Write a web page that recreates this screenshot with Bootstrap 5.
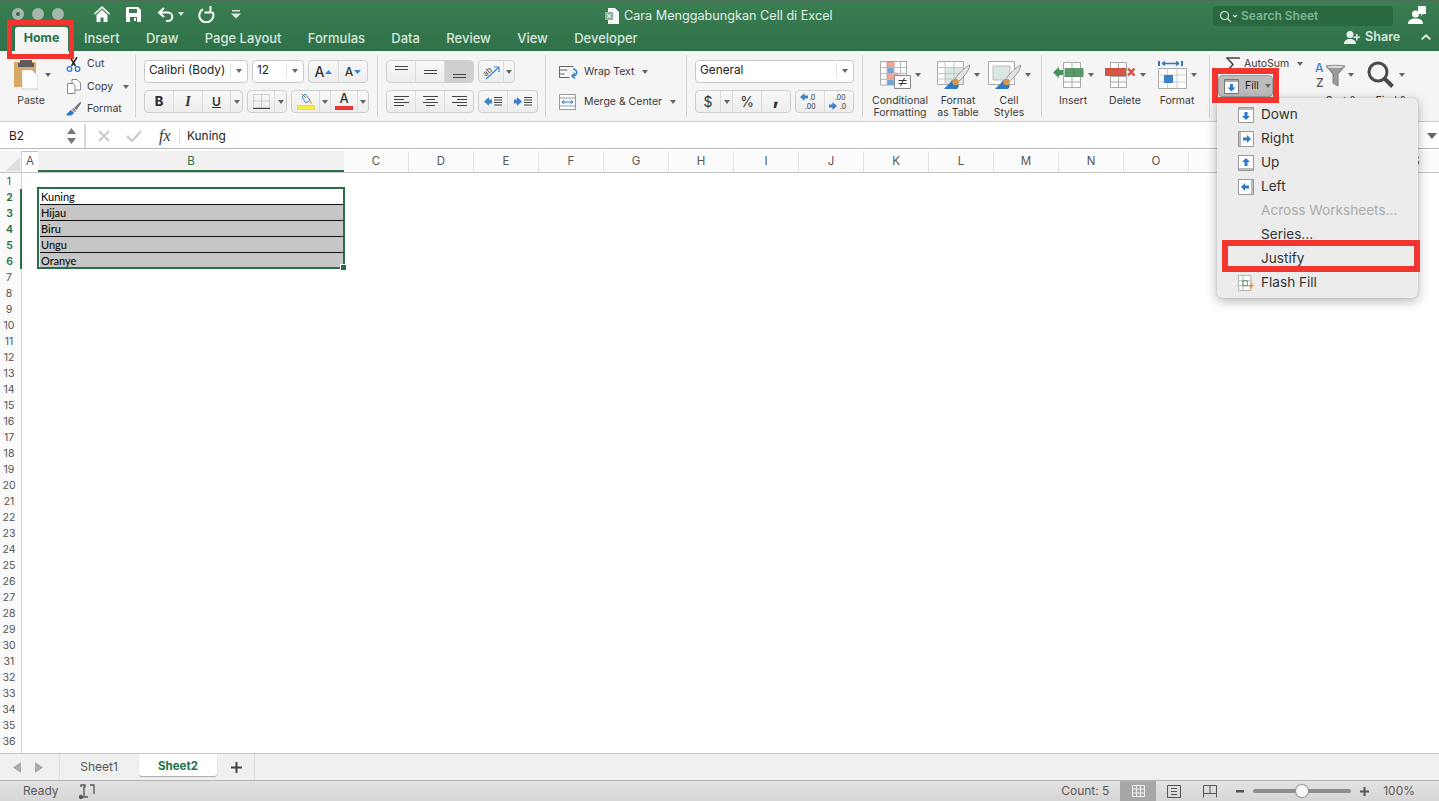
<!DOCTYPE html>
<html lang="en"><head><meta charset="utf-8"><title>Cara Menggabungkan Cell di Excel</title>
<link href="https://cdn.jsdelivr.net/npm/bootstrap@5.3.0/dist/css/bootstrap.min.css" rel="stylesheet">
<style>
html,body{height:100%;overflow:hidden;background:#fff}
body{font-family:Inter,"Liberation Sans",sans-serif;font-size:11px;color:#333}
svg{display:block;flex:none}
.xapp{height:801px;width:1439px;position:relative;overflow:hidden}
.xtitle{height:51px;background:linear-gradient(#3a7e52,#2f7148);border-top:1px solid #4d6f5a;color:#e3efe7;flex:none}
.xtop{height:26px;position:relative}
.xlights{width:90px;padding-left:12px;gap:8px}
.xlight{width:12px;height:12px;border-radius:50%;background:#a5b8ab}
.xqa{gap:16px;padding-left:4px}
.xundo{margin-right:-2px}
.xdoc{position:absolute;left:605px;top:6px;font-size:12.65px;gap:5px;color:#e3efe7}
.xsearch{position:absolute;left:1213px;top:5px;width:180px;height:20px;background:#2a6840;border-radius:3px;color:#7eb594;font-weight:600;font-size:12px;padding-left:6px;gap:2px}
.xperson{position:absolute;left:1408px;top:5px}
.xtabs{height:24px;padding-left:15px;position:relative;font-size:13px;font-weight:500;color:#d8e8dd}
.xtabitem{margin-right:26.3px;line-height:22px}
.xtabhome{width:53px;margin-right:16px;text-align:center;background:#f4f4f4;color:#217346;font-weight:700;font-size:12.4px;border-radius:3px 3px 0 0}
.xshare{position:absolute;left:1344px;top:-1px;gap:5px;font-size:12.6px;font-weight:600;line-height:22px}
.xribbon{height:71px;background:#f5f5f5;border-bottom:1px solid #cfcfcf;flex:none;color:#3a3a3a}
.xg{height:62px;margin-top:4px;border-right:1px solid #d2d2d2;flex:none}
.xg1{width:136px}.xg2{width:242px;padding:5px 0 0 8px}.xg3{width:168px;padding:5px 0 0 8px}.xg4{width:141px;padding:6px 0 0 13px}
.xg5{width:176px;padding:5px 0 0 8px}.xg6{width:179px;padding-left:8px}.xg7{width:168px;padding-left:5px}.xg8{padding-left:5px;border-right:0}
.xrow{height:23px;gap:4px;margin-bottom:7px}
.xsel{height:23px;background:#fff;border:1px solid #c9c9c9;border-radius:4px;font-size:11.8px;padding-left:4px;padding-bottom:2px;color:#222}
.xsel span:first-child{flex:1}
.xselcar{width:17px;height:15px;border-left:1px solid #e3e3e3;align-items:center;justify-content:center;display:flex}
.xcar{width:0;height:0;border-left:3px solid transparent;border-right:3px solid transparent;border-top:4px solid #666;flex:none}
.xbg{height:23px;background:linear-gradient(#f8f8f8,#ededed);border:1px solid #cfcfcf;border-radius:4px}
.xb{height:100%;display:flex;align-items:center;justify-content:center;border-right:1px solid #dcdcdc;flex:none;color:#333}
.xb:last-child{border-right:0}
.xbon{background:#cfcfcf;border-radius:0 3px 3px 0}
.xsm{height:16px;gap:6px;font-size:10.5px;margin-top:1px}
.xsmi{width:15px;display:flex;justify-content:center}
.xbig{flex:none;text-align:center;font-size:10.5px;line-height:12px;padding-top:5px}
.xbigi{height:30px;margin-bottom:5px;display:flex;justify-content:center;gap:4px;align-items:center}
.xcap{font-size:10.5px;height:22px;gap:0}
.xfill{width:55px;height:22px;margin:4px 0 0 3px;background:#bdbdbd;border:1px solid #9d9d9d;border-radius:4px;gap:6px;font-size:10.5px;padding-left:5px;color:#222}
.xfx{height:27px;background:#fff;border-bottom:1px solid #b8b8b8;flex:none;font-size:11.9px;color:#222;position:relative;padding-top:2px}
.xname{width:86px;height:100%;padding-left:9px;border-right:2px solid #d8d8d8;position:relative}
.xfxb{margin-left:11px;gap:15px;width:60px}
.xhead{height:24px;flex:none;border-top:2px solid #fff;box-shadow:inset 0 1px 0 #c0c0c0;border-bottom:1px solid #c6c6c6;background:#fff;color:#555;font-size:11.5px}
.xcorner{width:22px;height:100%;border-right:1px solid #d4d4d4;background:#f5f5f5;position:relative;overflow:hidden;flex:none}
.xca{width:16px}.xcb{width:306px;background:#f1f1f1;color:#217346;box-shadow:inset 0 -2px 0 #2a6e46}
.xcc{width:65px;border-right:1px solid #e3e3e3;background:#fbfbfb}
.xcol{flex:none;height:100%;display:flex;align-items:center;justify-content:center}
.xgrid{flex:1;position:relative;overflow:hidden;min-height:0}
.xr{height:16px}
.xrh{width:22px;height:16px;flex:none;border-right:1px solid #d4d4d4;background:#fafafa;color:#555;font-size:10.5px;display:flex;align-items:center;justify-content:center;padding:2px 3px 0 0}
.xrhon{color:#217346;font-weight:600;border-right:0;box-shadow:inset -2px 0 0 #2a6e46}
.xcell{margin-left:18px;width:303px;height:16px;font-family:Lato,sans-serif;font-size:11px;color:#000;padding-left:1px;line-height:16px;border-bottom:1px solid #111}
.xgray{background:#c6c6c6}
.xselect{position:absolute;left:37px;top:14px;width:308px;height:82px;border:2px solid #2a6e46;pointer-events:none}
.xhandle{position:absolute;right:-4px;bottom:-4px;width:7px;height:7px;background:#2a6e46;border:1px solid #fff}
.xsheets{height:27px;background:#f0f0f0;border-top:1px solid #c8c8c8;flex:none;font-size:12px;color:#555}
.xarr{width:60px;height:100%;border-right:1px solid #dcdcdc;gap:14px;padding-left:13px}
.xtab{width:78px;height:100%;display:flex;align-items:center;justify-content:center}
.xtabon{background:#fff;color:#217346;font-weight:700;font-size:11.5px;box-shadow:0 1px 1px #aaa;border-radius:0 0 3px 3px;align-self:flex-start;height:22px;padding-top:3px;margin-left:1px}
.xplus{width:37px;height:100%;border-right:1px solid #dcdcdc;margin-left:1px;display:flex;align-items:center;justify-content:center}
.xstatus{height:21px;flex:none;background:linear-gradient(#e2e2e2,#d6d6d6);border-top:1px solid #b4b4b4;font-size:12px;color:#5a5a5a;position:relative}
.xready{width:56px;margin-left:23px}
.xcount{margin-left:auto;width:59px}
.xview{width:36px;height:100%;display:flex;align-items:center;justify-content:center;flex:none}
.xviewon{background:#a7a7a7}
.xslider{width:98px;height:4px;background:#8e8e8e;border-radius:2px;position:relative;margin:0 9px}
.xthumb{position:absolute;left:43px;top:-4px;width:12px;height:12px;background:#f6f6f6;border-radius:50%;box-shadow:0 0 1px 1px #999}
.xzoom{margin:0 24px 0 14px}
.xmenu{position:absolute;left:1217px;top:98px;width:201px;height:200px;background:#ececec;border-radius:5px;box-shadow:0 3px 12px rgba(0,0,0,.3),0 0 1px rgba(0,0,0,.4);padding-top:5px;font-size:13.6px;color:#333;z-index:5}
.xmi{height:24px;padding-left:21px;gap:7px;padding-bottom:1px}
.xmicon{width:16px;height:16px;flex:none}
.xdim{color:#ababab}
.xred{position:absolute;border:5px solid #f2352f;z-index:6;pointer-events:none}
.xrhome{left:7px;top:20px;width:67px;height:39px}
.xrfill{left:1212px;top:68px;width:67px;height:35px;border-width:6px}
.xrjust{left:1222px;top:240px;width:198px;height:32px;border-width:6px}
</style></head><body>
<div class="xapp d-flex flex-column">
<header class="xtitle">
 <div class="xtop d-flex align-items-center">
  <div class="xlights d-flex align-items-center"><i class="xlight d-flex align-items-center justify-content-center"><svg width="4" height="4"><circle cx="2" cy="2" r="2" fill="#4c5a50"/></svg></i><i class="xlight"></i><i class="xlight"></i></div>
  <div class="xqa d-flex align-items-center">
   <svg width="16" height="16" viewBox="0 0 16 16" fill="#fff"><path d="M8 0 0 7.500 1 8.700 8 2.200l7 6.500 1-1.200zM2.500 9v7h4v-4.500h3V16h4V9L8 3.800z"/></svg>
   <svg width="15" height="15" viewBox="0 0 15 15"><path d="M1 0h11l3 3v12H0V1z" fill="#fff"/><path d="M3 2h8v4H3zM4 10h7v5H4z" fill="#3a7b50"/><path d="M8 11h2v3H8z" fill="#fff"/></svg>
   <span class="xundo d-flex align-items-center gap-1"><svg width="17" height="15" viewBox="0 0 17 15" fill="none" stroke="#fff" stroke-width="2"><path d="M7 1 2 5.500 7 10M2 5.500h9a4.200 4.200 0 0 1 0 8.500H9"/></svg><i class="xcar" style="border-top-color:#dbe8df"></i></span>
   <svg width="17" height="17" viewBox="0 0 17 17" fill="none" stroke="#fff" stroke-width="2"><path d="M5 3.200A7 7 0 1 0 14.500 6M12.500 0v6.500H6.500"/></svg>
   <svg width="10" height="10" viewBox="0 0 10 10" fill="#dbe8df"><path d="M1 1h8v1.500H1zM0 4.500h10L5 9.500z"/></svg>
  </div>
  <div class="xdoc d-flex align-items-center"><svg width="14" height="16" viewBox="0 0 14 16"><path d="M3 0h7l4 4v12H3z" fill="#f4f7f5"/><path d="M0 4h8v8H0z" fill="#8fb39c"/><path d="m2 6 4 4m0-4-4 4" stroke="#fff"/></svg><span>Cara Menggabungkan Cell di Excel</span></div>
  <div class="xsearch d-flex align-items-center"><svg width="20" height="13" viewBox="0 0 20 13" fill="none" stroke="#dcebe1" stroke-width="1.200"><circle cx="5.500" cy="5.500" r="4"/><path d="m8.500 8.500 3.500 3.500M14 5l2 2 2-2"/></svg><span>Search Sheet</span></div>
  <svg class="xperson" width="18" height="19" viewBox="0 0 18 19" fill="#fff"><path d="M10 0h8v8h-3l-2 2V8h-3z"/><circle cx="7.500" cy="8" r="3.500"/><path d="M0 18c0-4 3-5.500 7.500-5.500S15 14 15 18z"/></svg>
 </div>
 <nav class="xtabs d-flex">
  <span class="xtabitem xtabhome">Home</span><span class="xtabitem">Insert</span><span class="xtabitem">Draw</span><span class="xtabitem">Page Layout</span><span class="xtabitem">Formulas</span><span class="xtabitem">Data</span><span class="xtabitem">Review</span><span class="xtabitem">View</span><span class="xtabitem">Developer</span>
  <div class="xshare d-flex align-items-center"><svg width="16" height="13" viewBox="0 0 16 13" fill="#e6f0ea"><circle cx="6" cy="3.500" r="3.500"/><path d="M0 13c0-3.500 2.500-5 6-5s6 1.500 6 5zM12 3h1.500v2.500H16V7h-2.500v2.500H12V7H9.500V5.500H12z"/></svg><span>Share</span><svg class="ms-3" width="10" height="6" viewBox="0 0 10 6" fill="none" stroke="#e6f0ea" stroke-width="1.800"><path d="m.7 5.300 4.300-4 4.300 4"/></svg></div>
 </nav>
</header>

<section class="xribbon d-flex">
 <div class="xg xg1 d-flex">
  <div class="xbig" style="width:62px"><div class="xbigi justify-content-start" style="padding-left:14px;gap:7px"><svg width="24" height="30" viewBox="0 1 24 30"><path d="M0 3h22v25H0z" fill="#d9a866"/><path d="M6 1h12v3h2v4H4V4h2z" fill="#5c5c5c"/><path d="M8 11h10l6 6v13H8z" fill="#fff" stroke="#bbb" stroke-width=".7"/></svg><i class="xcar"></i></div><div>Paste</div></div>
  <div class="d-flex flex-column justify-content-between ms-1" style="height:62px">
   <div class="xsm d-flex align-items-center"><span class="xsmi"><svg width="15" height="15" viewBox="0 0 15 15" fill="none"><path d="m4 0 5.500 9M11 0 5.500 9" stroke="#222" stroke-width="1.500"/><circle cx="3.500" cy="12" r="2.300" stroke="#2f78c4" stroke-width="1.300"/><circle cx="11.500" cy="12" r="2.300" stroke="#2f78c4" stroke-width="1.300"/></svg></span>Cut</div>
   <div class="xsm d-flex align-items-center"><span class="xsmi"><svg width="14" height="15" viewBox="0 0 14 15" fill="#fff" stroke="#888"><path d="M5 .5h5l3.500 3.500v7h-8.500z"/><path d="M.5 4.500h6l1.500 2v8h-7.500z"/></svg></span>Copy<i class="xcar" style="margin-left:4px"></i></div>
   <div class="xsm d-flex align-items-center"><span class="xsmi"><svg width="16" height="15" viewBox="0 0 16 15"><path d="M0 13c3 1 6 1 8-2L5 8C3 9 2 11 0 13z" fill="#2f78c4"/><path d="m5.500 7.500 3 3 2-1.500L7.500 6z" fill="#999"/><path d="m8 6 5.500-5.500c1-1 2 0 1.500 1L10.500 8z" fill="#777"/></svg></span>Format</div>
  </div>
 </div>
 <div class="xg xg2">
  <div class="xrow d-flex">
   <div class="xsel d-flex align-items-center" style="width:104px"><span>Calibri (Body)</span><i class="xselcar"><i class="xcar"></i></i></div>
   <div class="xsel d-flex align-items-center" style="width:52px"><span>12</span><i class="xselcar"><i class="xcar"></i></i></div>
   <div class="xbg d-flex" style="width:60px"><span class="xb" style="width:30px;font-size:14px;font-weight:500;gap:1px">A<svg width="7" height="4"><path d="M0 4 3.500 0 7 4z" fill="#3b82c9"/></svg></span><span class="xb" style="width:28px;font-size:12px;font-weight:500;gap:1px">A<svg width="7" height="4"><path d="M0 0 3.500 4 7 0z" fill="#3b82c9"/></svg></span></div>
  </div>
  <div class="xrow d-flex">
   <div class="xbg d-flex" style="width:99px"><span class="xb" style="width:29px;font-size:13px;font-weight:800">B</span><span class="xb" style="width:29px;font-family:'Liberation Serif',serif;font-size:14px;font-style:italic;font-weight:700">I</span><span class="xb text-decoration-underline" style="width:28px;font-size:12px;font-weight:600">U</span><span class="xb" style="width:11px"><i class="xcar"></i></span></div>
   <div class="xbg d-flex" style="width:40px"><span class="xb" style="width:27px"><svg width="17" height="15" viewBox="0 0 17 15" fill="none" stroke="#aaa" stroke-dasharray="1 1"><path d="M.5.5h16v13H.500zM8.500.5v13M.5 7h16"/><path d="M0 14.500h17" stroke="#444" stroke-dasharray="none"/></svg></span><span class="xb" style="width:11px"><i class="xcar"></i></span></div>
   <div class="xbg d-flex" style="width:78px"><span class="xb" style="width:28px"><svg width="18" height="17" viewBox="0 0 18 17"><path d="m8 1 5 6-4 3-4-6z" fill="#fff" stroke="#3a78b8"/><path d="M5 1 9 5" stroke="#666"/><path d="M13 7c2 2 2 3 1 4-1-1-2-2-1-4z" fill="#d9a14a"/><path d="M0 12.500h18V17H0z" fill="#f8ec3c" stroke="#c9c02a" stroke-width=".5"/></svg></span><span class="xb" style="width:11px"><i class="xcar"></i></span><span class="xb flex-column" style="width:27px;font-size:13px;font-weight:500;line-height:11px">A<i style="width:18px;height:4px;background:#ea3535;margin-top:2px"></i></span><span class="xb" style="width:10px"><i class="xcar"></i></span></div>
  </div>
 </div>
 <div class="xg xg3">
  <div class="xrow d-flex">
   <div class="xbg d-flex" style="width:88px"><span class="xb" style="width:29px"><svg width="13" height="18" stroke="#444"><path d="M0 3.500h13M0 6.500h13"/></svg></span><span class="xb" style="width:29px"><svg width="13" height="18" stroke="#444"><path d="M0 7.500h13M0 10.500h13"/></svg></span><span class="xb xbon" style="width:28px"><svg width="13" height="18" stroke="#444"><path d="M0 11.500h13M0 14.500h13"/></svg></span></div>
   <div class="xbg d-flex" style="width:37px"><span class="xb" style="width:25px"><svg width="18" height="16" viewBox="0 0 18 16" fill="none" style="overflow:visible"><text x="1" y="10" transform="rotate(-40 6 8)" font-size="8" fill="#444" font-family="Inter">ab</text><path d="m4 15 12-11M12 3h5v5" stroke="#3b82c9" stroke-width="1.200"/></svg></span><span class="xb" style="width:10px"><i class="xcar"></i></span></div>
  </div>
  <div class="xrow d-flex">
   <div class="xbg d-flex" style="width:88px"><span class="xb" style="width:29px"><svg width="15" height="11" stroke="#444"><path d="M0 .5h15M0 3.500h10M0 6.500h15M0 9.500h10"/></svg></span><span class="xb" style="width:29px"><svg width="15" height="11" stroke="#444"><path d="M0 .5h15M3 3.500h9M0 6.500h15M3 9.500h9"/></svg></span><span class="xb" style="width:28px"><svg width="15" height="11" stroke="#444"><path d="M0 .5h15M5 3.500h10M0 6.500h15M5 9.500h10"/></svg></span></div>
   <div class="xbg d-flex" style="width:60px"><span class="xb" style="width:29px"><svg width="18" height="11"><path d="M0 5.500 5 1v2.500h3v4H5V10z" fill="#3b82c9"/><path d="M10 1.500h8M10 4h8M10 6.500h8M10 9h8" stroke="#444"/></svg></span><span class="xb" style="width:29px"><svg width="18" height="11"><path d="M8 5.500 3 1v2.500H0v4h3V10z" fill="#3b82c9"/><path d="M10 1.500h8M10 4h8M10 6.500h8M10 9h8" stroke="#444"/></svg></span></div>
  </div>
 </div>
 <div class="xg xg4">
  <div class="xrow xcap d-flex align-items-center"><svg width="21" height="14" viewBox="0 0 21 14" fill="none"><path d="M.5 1.500h14M.5 1.500v11h10M.5 5h8M.5 9h5" stroke="#666"/><path d="M14 4c5 1 5 6 0 7m2-3-3 3 3 2.500" stroke="#3b82c9" stroke-width="1.500"/></svg><span class="ms-1">Wrap Text</span><i class="xcar ms-2"></i></div>
  <div class="xrow xcap d-flex align-items-center" style="margin-top:8px"><svg width="17" height="16" viewBox="0 0 17 16" fill="#fff" stroke="#999"><path d="M.5.5h16v15H.5zM.5 4h16M.5 12h16"/><path d="M3 8h11M3 8l2.500-2M3 8l2.500 2M14 8l-2.500-2M14 8l-2.500 2" stroke="#2f78c4" fill="none"/></svg><span class="ms-2">Merge &amp; Center</span><i class="xcar ms-2"></i></div>
 </div>
 <div class="xg xg5">
  <div class="xrow d-flex"><div class="xsel d-flex align-items-center" style="width:159px"><span>General</span><i class="xselcar"><i class="xcar"></i></i></div></div>
  <div class="xrow d-flex">
   <div class="xbg d-flex" style="width:96px"><span class="xb" style="width:25px;font-size:14px">$</span><span class="xb" style="width:12px"><i class="xcar"></i></span><span class="xb" style="width:29px;font-size:14px">%</span><span class="xb" style="width:28px;font-size:20px;font-weight:800;padding-bottom:9px">,</span></div>
   <div class="xbg d-flex" style="width:59px"><span class="xb" style="width:29px"><svg width="20" height="18" viewBox="0 0 20 18"><path d="M0 4 4.500 0v2.500H8v3H4.500V8z" fill="#3b82c9"/><text x="9" y="7" font-size="7" fill="#333" font-family="Inter">.0</text><text x="5" y="16" font-size="7" fill="#333" font-family="Inter">.00</text></svg></span><span class="xb" style="width:28px"><svg width="20" height="18" viewBox="0 0 20 18"><text x="6" y="7" font-size="7" fill="#333" font-family="Inter">.00</text><path d="M8 13 3.500 9v2.500H0v3h3.500V17z" fill="#3b82c9"/><text x="11" y="16" font-size="7" fill="#333" font-family="Inter">.0</text></svg></span></div>
  </div>
 </div>
 <div class="xg xg6 d-flex">
  <div class="xbig" style="width:58px"><div class="xbigi"><svg width="31" height="28" viewBox="0 0 31 28"><path d="M.5.500h26v23.500H.5z" fill="#fff" stroke="#aaa"/><path d="M7 6h7v18H7z" fill="#6aa6e0"/><path d="M7 1h7v5H7zM7 12h11v6H7z" fill="#f0a59e" stroke="#d9665c" stroke-width=".5"/><path d="M.5 6.500h26M.5 12.500h26M.5 18.500h26M7 .5V24M14 .5V24M20.500.5V24" stroke="#bbb" fill="none"/><path d="M14.500 14.500h16v13h-16z" fill="#fff" stroke="#888"/><path d="M18.500 19.500h8M18.500 22.500h8M24.500 17l-4 8" stroke="#333" fill="none"/></svg><i class="xcar"></i></div><div>Conditional Formatting</div></div>
  <div class="xbig" style="width:58px"><div class="xbigi"><svg width="33" height="28" viewBox="0 0 33 28"><path d="M.5.500h26v23H.5z" fill="#fff" stroke="#aaa"/><path d="M8 6h18v17H8z" fill="#dbe7e3"/><path d="M.5 6.500h26M.5 12.500h26M.5 18h26M8 .5v23M17 .5v23" stroke="#c4c4c4" fill="none"/><path d="M33 4C28 6 21 13 18 18l3 3C26 17 32 10 33 4z" fill="#e4e4e4" stroke="#777" stroke-width=".7"/><path d="M15 19c-2 4-6 6-8 9h13c2-2 2-3 1-5z" fill="#2f78c4"/><circle cx="18.500" cy="21" r="3.300" fill="#d9954a"/></svg><i class="xcar"></i></div><div>Format<br>as Table</div></div>
  <div class="xbig" style="width:44px"><div class="xbigi"><svg width="33" height="28" viewBox="0 0 33 28"><path d="M.5.500h26v23H.5z" fill="#fff" stroke="#aaa"/><path d="M5 5h17v14H5z" fill="#dbe7e3" stroke="#bdbdbd"/><path d="M33 4C28 6 21 13 18 18l3 3C26 17 32 10 33 4z" fill="#e4e4e4" stroke="#777" stroke-width=".7"/><path d="M15 19c-2 4-6 6-8 9h13c2-2 2-3 1-5z" fill="#2f78c4"/><circle cx="18.500" cy="21" r="3.300" fill="#d9954a"/></svg><i class="xcar"></i></div><div>Cell<br>Styles</div></div>
 </div>
 <div class="xg xg7 d-flex">
  <div class="xbig" style="width:52px"><div class="xbigi"><svg width="31" height="26" viewBox="0 0 31 26"><path d="M10.500.5h17v25h-17z" fill="#fff" stroke="#aaa"/><path d="M10.500 14.500h17M10.500 20h17M19 14v12M19 .5V6" stroke="#aaa" fill="none"/><path d="M12 6.500h18v8H12z" fill="#5c9a6e" stroke="#468257" stroke-width=".7"/><path d="M21 6.500v8" stroke="#468257"/><path d="M0 10.500 6 5v3h4v5H6v3z" fill="#468f5e"/></svg><i class="xcar"></i></div><div>Insert</div></div>
  <div class="xbig" style="width:52px"><div class="xbigi"><svg width="31" height="26" viewBox="0 0 31 26"><path d="M5.500.5h16v25h-16z" fill="#fff" stroke="#aaa"/><path d="M5.500 14.500h16M5.500 20h16M13.500 14v12M13.500 .5V6" stroke="#aaa" fill="none"/><path d="M0 6h21v8H0z" fill="#cf5140"/><path d="M0 8h21M0 10h21M0 12h21" stroke="#dc7a68" stroke-width=".6" stroke-dasharray="1 1"/><path d="m23 6.500 6.500 7m0-7-6.500 7" stroke="#cf5140" stroke-width="2.500"/></svg><i class="xcar"></i></div><div>Delete</div></div>
  <div class="xbig" style="width:52px"><div class="xbigi"><svg width="29" height="28" viewBox="0 0 29 28"><path d="M1 0v5M24 0v5" stroke="#2f78c4" stroke-width="2"/><path d="M4 2.500h17M4 2.500l3-2M4 2.500l3 2M21 2.500l-3-2M21 2.500l-3 2" stroke="#2f78c4" stroke-width="1.500" fill="none"/><path d="M.5 7.500h28v20H.5z" fill="#fff" stroke="#aaa"/><path d="M.5 14h28M.5 21h28M9.500 7.500v20M19 7.500v20" stroke="#ccc"/><path d="M6 14h9v8H6z" fill="#3b82c9"/></svg><i class="xcar"></i></div><div>Format</div></div>
 </div>
 <div class="xg xg8 d-flex">
  <div style="width:100px">
   <div class="xcap d-flex align-items-center" style="height:16px;padding:2px 0 0 11px"><svg width="14" height="15" viewBox="0 0 14 15" fill="none" stroke="#444" stroke-width="1.500"><path d="M14 1H1l6 6.500L1 14h13"/></svg><span class="ms-1">AutoSum</span><i class="xcar ms-2"></i></div>
   <div class="xfill d-flex align-items-center"><svg width="15" height="15" viewBox="0 0 15 15"><path d="M.5.500h14v14H.5z" fill="#fff" stroke="#777"/><path d="M1 1h13v2H1z" fill="#aaa"/><path d="M7.500 12.500 3.500 8.500H6V5h3v3.500h2.500z" fill="#2f78c4"/></svg><span>Fill</span><i class="xcar"></i></div>
  </div>
  <div class="xbig" style="width:52px"><div class="xbigi justify-content-start" style="gap:2px"><svg width="31" height="26" viewBox="0 0 31 26" style="overflow:visible"><text x="0" y="10" font-size="12" font-weight="500" fill="#3b82c9" font-family="Inter">A</text><text x="1" y="25" font-size="12" font-weight="500" fill="#555" font-family="Inter">Z</text><path d="M11 4h19l-7 8v12l-5-3v-9z" fill="#9b9b9b" stroke="#7a7a7a"/><ellipse cx="20.500" cy="5" rx="9" ry="1.800" fill="#dcdcdc" stroke="#7a7a7a" stroke-width=".7"/></svg><i class="xcar"></i></div><div>Sort &amp;<br>Filter</div></div>
  <div class="xbig" style="width:48px"><div class="xbigi justify-content-start"><svg width="28" height="28" viewBox="0 0 28 28" fill="none" stroke="#4a4a4a"><circle cx="11" cy="11" r="9" stroke-width="3"/><path d="m17.500 17.500 8 8" stroke-width="4"/></svg><i class="xcar"></i></div><div>Find &amp;<br>Select</div></div>
 </div>
</section>

<section class="xfx d-flex align-items-center">
 <div class="xname d-flex align-items-center"><span>B2</span><svg class="ms-auto me-2" width="9" height="18" viewBox="0 0 9 18" fill="#777"><path d="M0 7 4.500 1 9 7zM0 11l4.500 6L9 11z"/></svg></div>
 <div class="xfxb d-flex align-items-center"><svg width="14" height="14" stroke="#c8c8c8" stroke-width="2"><path d="m2 2 10 10m0-10L2 12"/></svg><svg width="16" height="14" fill="none" stroke="#c8c8c8" stroke-width="2"><path d="m1 7 5 5L15 2"/></svg></div>
 <span style="font-family:'Liberation Serif',serif;font-style:italic;font-size:16px;width:22px;padding-left:2px;color:#333">fx</span>
 <span style="border-left:1px solid #ddd;height:15px;width:8px"></span>
 <span>Kuning</span>
 <i class="xcar position-absolute" style="left:1427px;top:11px;border-width:6px 5px 0;border-left-color:transparent;border-right-color:transparent"></i>
</section>

<div class="xhead d-flex">
 <div class="xcorner"><svg class="position-absolute" style="right:1px;bottom:1px" width="14" height="14"><path d="M14 0v14H0z" fill="#dedede"/></svg></div>
 <div class="xcol xca">A</div><div class="xcol xcb">B</div><div class="xcol xcc">C</div><div class="xcol xcc">D</div><div class="xcol xcc">E</div><div class="xcol xcc">F</div><div class="xcol xcc">G</div><div class="xcol xcc">H</div><div class="xcol xcc">I</div><div class="xcol xcc">J</div><div class="xcol xcc">K</div><div class="xcol xcc">L</div><div class="xcol xcc">M</div><div class="xcol xcc">N</div><div class="xcol xcc">O</div><div class="xcol xcc">P</div><div class="xcol xcc">Q</div><div class="xcol xcc">R</div><div class="xcol xcc">S</div>
</div>

<main class="xgrid">
 <div class="xr d-flex"><div class="xrh">1</div></div>
 <div class="xr d-flex"><div class="xrh xrhon">2</div><div class="xcell">Kuning</div></div>
 <div class="xr d-flex"><div class="xrh xrhon">3</div><div class="xcell xgray">Hijau</div></div>
 <div class="xr d-flex"><div class="xrh xrhon">4</div><div class="xcell xgray">Biru</div></div>
 <div class="xr d-flex"><div class="xrh xrhon">5</div><div class="xcell xgray">Ungu</div></div>
 <div class="xr d-flex"><div class="xrh xrhon">6</div><div class="xcell xgray">Oranye</div></div>
 <div class="xr d-flex"><div class="xrh">7</div></div><div class="xr d-flex"><div class="xrh">8</div></div><div class="xr d-flex"><div class="xrh">9</div></div><div class="xr d-flex"><div class="xrh">10</div></div><div class="xr d-flex"><div class="xrh">11</div></div><div class="xr d-flex"><div class="xrh">12</div></div><div class="xr d-flex"><div class="xrh">13</div></div><div class="xr d-flex"><div class="xrh">14</div></div><div class="xr d-flex"><div class="xrh">15</div></div><div class="xr d-flex"><div class="xrh">16</div></div><div class="xr d-flex"><div class="xrh">17</div></div><div class="xr d-flex"><div class="xrh">18</div></div><div class="xr d-flex"><div class="xrh">19</div></div><div class="xr d-flex"><div class="xrh">20</div></div><div class="xr d-flex"><div class="xrh">21</div></div><div class="xr d-flex"><div class="xrh">22</div></div><div class="xr d-flex"><div class="xrh">23</div></div><div class="xr d-flex"><div class="xrh">24</div></div><div class="xr d-flex"><div class="xrh">25</div></div><div class="xr d-flex"><div class="xrh">26</div></div><div class="xr d-flex"><div class="xrh">27</div></div><div class="xr d-flex"><div class="xrh">28</div></div><div class="xr d-flex"><div class="xrh">29</div></div><div class="xr d-flex"><div class="xrh">30</div></div><div class="xr d-flex"><div class="xrh">31</div></div><div class="xr d-flex"><div class="xrh">32</div></div><div class="xr d-flex"><div class="xrh">33</div></div><div class="xr d-flex"><div class="xrh">34</div></div><div class="xr d-flex"><div class="xrh">35</div></div><div class="xr d-flex"><div class="xrh">36</div></div>
 <div class="xrh" style="height:4px"></div>
 <div class="xselect"><i class="xhandle"></i></div>
</main>

<div class="xsheets d-flex">
 <div class="xarr d-flex align-items-center"><svg width="8" height="11"><path d="M8 0v11L0 5.500z" fill="#aaa"/></svg><svg width="8" height="11"><path d="M0 0v11l8-5.500z" fill="#aaa"/></svg></div>
 <div class="xtab">Sheet1</div><div class="xtab xtabon">Sheet2</div>
 <div class="xplus"><svg width="11" height="11" stroke="#444" stroke-width="2"><path d="M5.500 0v11M0 5.500h11"/></svg></div>
</div>

<footer class="xstatus d-flex align-items-center">
 <span class="xready">Ready</span>
 <svg width="16" height="15" viewBox="0 0 16 15" fill="none" stroke="#555" stroke-width="1.300"><path d="M2 3V1h4v2H5v9M11 1h4v9M9 13H3"/><circle cx="2" cy="13" r="1.500" fill="#555"/></svg>
 <span class="xcount">Count: 5</span>
 <div class="xview xviewon"><svg width="13" height="12" fill="none" stroke="#f0f0f0"><path d="M.5.500h12v11H.5zM.5 4h12M.5 8h12M4.500.5v11M8.500.5v11"/></svg></div>
 <div class="xview"><svg width="14" height="13" fill="none" stroke="#555"><path d="M.5.500h13v12H.5zM4 3.500h6M4 6.500h6M4 9.500h6"/></svg></div>
 <div class="xview"><svg width="14" height="13" fill="none" stroke="#555"><path d="M.5 12.500V.5h13v12M.5 8.500h13M7 .5v8"/></svg></div>
 <svg class="ms-2" width="8" height="3"><path d="M0 0h8v2.500H0z" fill="#555"/></svg>
 <div class="xslider"><i class="xthumb"></i></div>
 <svg width="9" height="9"><path d="M3.500 0h2v3.500H9v2H5.500V9h-2V5.500H0v-2h3.500z" fill="#555"/></svg>
 <span class="xzoom">100%</span>
</footer>

<div class="xmenu">
 <div class="xmi d-flex align-items-center"><svg class="xmicon" viewBox="0 0 16 16"><path d="M.5.500h15v15H.5z" fill="#fff" stroke="#999"/><path d="M1 1h14v2H1z" fill="#bbb"/><path d="M8 13 4 9h2.500V5h3v4H12z" fill="#2f78c4"/></svg><span>Down</span></div>
 <div class="xmi d-flex align-items-center"><svg class="xmicon" viewBox="0 0 16 16"><path d="M.5.500h15v15H.5z" fill="#fff" stroke="#999"/><path d="M1 1h2v14H1z" fill="#bbb"/><path d="M13 8 9 4v2.500H5v3h4V12z" fill="#2f78c4"/></svg><span>Right</span></div>
 <div class="xmi d-flex align-items-center"><svg class="xmicon" viewBox="0 0 16 16"><path d="M.5.500h15v15H.5z" fill="#fff" stroke="#999"/><path d="M1 13h14v2H1z" fill="#bbb"/><path d="M8 3 4 7h2.500v4h3V7H12z" fill="#2f78c4"/></svg><span>Up</span></div>
 <div class="xmi d-flex align-items-center"><svg class="xmicon" viewBox="0 0 16 16"><path d="M.5.500h15v15H.5z" fill="#fff" stroke="#999"/><path d="M13 1h2v14h-2z" fill="#bbb"/><path d="M3 8l4-4v2.500h4v3H7V12z" fill="#2f78c4"/></svg><span>Left</span></div>
 <div class="xmi d-flex align-items-center xdim"><span class="xmicon"></span><span>Across Worksheets...</span></div>
 <div class="xmi d-flex align-items-center"><span class="xmicon"></span><span>Series...</span></div>
 <div class="xmi d-flex align-items-center"><span class="xmicon"></span><span>Justify</span></div>
 <div class="xmi d-flex align-items-center"><svg class="xmicon" viewBox="0 0 18 18" style="overflow:visible"><path d="M.5.500h14v17H.5zM.5 6.500h14M.5 12h14M5.500.5v17" fill="#fff" stroke="#aaa"/><path d="M5.500 6.500h5v5.500h-5z" fill="none" stroke="#3a9a5a"/><path d="M17 7l-5 6h3l-3 5 6-7h-3z" fill="#f0852d"/></svg><span>Flash Fill</span></div>
</div>

<div class="xred xrhome"></div>
<div class="xred xrfill"></div>
<div class="xred xrjust"></div>
</div>
<script src="https://cdn.jsdelivr.net/npm/bootstrap@5.3.0/dist/js/bootstrap.bundle.min.js"></script>
</body></html>
